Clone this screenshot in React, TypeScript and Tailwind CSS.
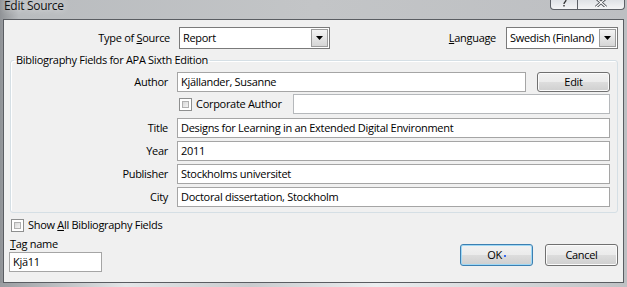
import React from 'react';

const font = "font-['Open_Sans','Noto_Sans',sans-serif]";

function Combo({ value, width }: { value: string; width: string }) {
  return (
    <div className={`flex h-[22px] border border-[#7a7a7a] bg-white ${width}`}>
      <div className="flex-1 px-[3px] leading-[20px] whitespace-nowrap overflow-hidden">{value}</div>
      <div className="my-[1px] mr-[1px] w-[17px] border border-[#9c9c9c] bg-gradient-to-b from-[#f4f4f4] to-[#d6d6d6] flex items-center justify-center">
        <svg width="7" height="4" viewBox="0 0 7 4">
          <path d="M0 0h7L3.5 4z" fill="#000" />
        </svg>
      </div>
    </div>
  );
}

function Field({ value, className = '' }: { value?: string; className?: string }) {
  return (
    <div className={`h-[20px] border border-[#a5a5a5] bg-white px-[3px] leading-[18px] whitespace-nowrap overflow-hidden ${className}`}>
      {value}
    </div>
  );
}

function Check() {
  return (
    <div className="w-[13px] h-[13px] border border-[#8e8f8f] bg-white p-[2px]">
      <div className="w-full h-full border border-[#b0b0b0] bg-gradient-to-br from-[#d8d8d8] to-[#f4f4f4]" />
    </div>
  );
}

function Button({ label, primary = false, dot = false }: { label: string; primary?: boolean; dot?: boolean }) {
  return (
    <button
      className={`w-[73px] h-[22px] rounded-[3px] border text-black bg-[linear-gradient(to_bottom,#f2f2f2_0%,#ebebeb_50%,#dddddd_50%,#cfcfcf_100%)] ${
        primary
          ? 'border-[#3c7fb1] shadow-[inset_0_0_0_1px_#9fd8f5]'
          : 'border-[#707070] shadow-[inset_0_0_0_1px_#fbfbfb]'
      }`}
    >
      {label}
      {dot && <span className="inline-block w-[2px] h-[2px] bg-[#3a6cf0] ml-[2px] align-middle" />}
    </button>
  );
}

function Label({ children }: { children: React.ReactNode }) {
  return <div className="text-right leading-[20px] whitespace-nowrap">{children}</div>;
}

export default function App() {
  return (
    <div className={`w-[627px] h-[287px] overflow-hidden flex flex-col bg-[linear-gradient(to_right,#8f9296,#b9bcbf_3%,#c3c5c7_50%,#bdbfc2)] ${font} text-[11px] tracking-[-0.3px] text-black`}>
      {/* Title bar */}
      <div className="h-[19px] flex items-start justify-between">
        <div className="pl-[4px] text-[12px] leading-[12px] text-[#111] [text-shadow:0_0_6px_#f0f0f0]">
          Edit Source
        </div>
        <div className="flex mr-[2px]">
          <div className="w-[28px] h-[10px] border border-t-0 border-[#5c6066] rounded-bl-[4px] bg-gradient-to-b from-[#dfe2e6] to-[#f4f5f6] flex justify-center overflow-hidden">
            <svg width="8" height="10" viewBox="0 0 8 10" className="-mt-[2px]">
              <path d="M2 2c0-2 4-2 4 0s-2 2-2 4" stroke="#333" strokeWidth="1.3" fill="none" />
              <rect x="3.3" y="7" width="1.4" height="1.5" fill="#333" />
            </svg>
          </div>
          <div className="w-[47px] h-[10px] border border-l-0 border-t-0 border-[#5c6066] rounded-br-[4px] bg-gradient-to-b from-[#dfe2e6] to-[#f4f5f6] flex justify-center overflow-hidden">
            <svg width="14" height="10" viewBox="0 0 14 10" className="-mt-[3px]">
              <path d="M2 1l5 4.5 5-4.5M2 10l5-4.5 5 4.5" stroke="#4a4e54" strokeWidth="3" fill="none" />
              <path d="M2 1l5 4.5 5-4.5M2 10l5-4.5 5 4.5" stroke="#fff" strokeWidth="1.2" fill="none" />
            </svg>
          </div>
        </div>
      </div>

      {/* Client area */}
      <div className="ml-[3px] mr-[3px] h-[264px] border border-[#5a5d62] bg-[#f0f0f0] flex flex-col">
        {/* Type of source / language */}
        <div className="mt-[7px] flex items-center pr-[5px]">
          <div className="w-[166px] text-right">
            Type of <span className="underline">S</span>ource
          </div>
          <div className="ml-[9px]">
            <Combo value="Report" width="w-[151px]" />
          </div>
          <div className="flex-1" />
          <div>
            <span className="underline">L</span>anguage
          </div>
          <div className="ml-[10px]">
            <Combo value="Swedish (Finland)" width="w-[112px]" />
          </div>
        </div>

        {/* Group box */}
        <fieldset className="mt-[3px] ml-[6px] mr-[5px] border border-[#d5dfe5] rounded-[3px] pr-[7px] pb-[5px] pt-[4px] shadow-[inset_1px_1px_0_#fff]">
          <legend className="ml-[3px] px-[2px] leading-[16px]">Bibliography Fields for APA Sixth Edition</legend>
          <div className="grid grid-cols-[157px_1fr] gap-x-[9px]">
            <Label>Author</Label>
            <div className="flex gap-[11px]">
              <Field value="Kjällander, Susanne" className="flex-1" />
              <button className="w-[73px] h-[20px] rounded-[3px] border border-[#707070] shadow-[inset_0_0_0_1px_#fbfbfb] bg-[linear-gradient(to_bottom,#f2f2f2_0%,#ebebeb_50%,#dddddd_50%,#cfcfcf_100%)] leading-[18px]">
                Edit
              </button>
            </div>

            <div className="mt-[2px]" />
            <div className="mt-[2px] flex items-center">
              <div className="ml-[2px]">
                <Check />
              </div>
              <div className="ml-[4px] w-[97px]">Corporate Author</div>
              <Field className="flex-1 bg-[#f0f0f0] border-[#b5b8bb]" />
            </div>

            <div className="mt-[4px]"><Label>Title</Label></div>
            <Field value="Designs for Learning in an Extended Digital Environment" className="mt-[4px]" />

            <div className="mt-[3px]"><Label>Year</Label></div>
            <Field value="2011" className="mt-[3px]" />

            <div className="mt-[3px]"><Label>Publisher</Label></div>
            <Field value="Stockholms universitet" className="mt-[3px]" />

            <div className="mt-[3px]"><Label>City</Label></div>
            <Field value="Doctoral dissertation, Stockholm" className="mt-[3px]" />
          </div>
        </fieldset>

        {/* Show all */}
        <div className="mt-[6px] ml-[7px] flex items-center gap-[4px] h-[13px]">
          <Check />
          <div>
            Show <span className="underline">A</span>ll Bibliography Fields
          </div>
        </div>

        {/* Bottom row */}
        <div className="flex justify-between pr-[5px]">
          <div className="ml-[5px] flex flex-col">
            <div className="mt-[4px] leading-[16px] pl-[1px]">
              <span className="underline">T</span>ag name
            </div>
            <Field value="Kjä11" className="w-[93px]" />
          </div>
          <div className="mt-[12px] flex gap-[12px]">
            <Button label="OK" primary dot />
            <Button label="Cancel" />
          </div>
        </div>
      </div>

      <div className="flex-1 bg-[linear-gradient(to_right,#9a9da1,#e4e6e8_20%,#c9cbce_40%,#eceef0_60%,#bfc1c4)]" />
    </div>
  );
}
